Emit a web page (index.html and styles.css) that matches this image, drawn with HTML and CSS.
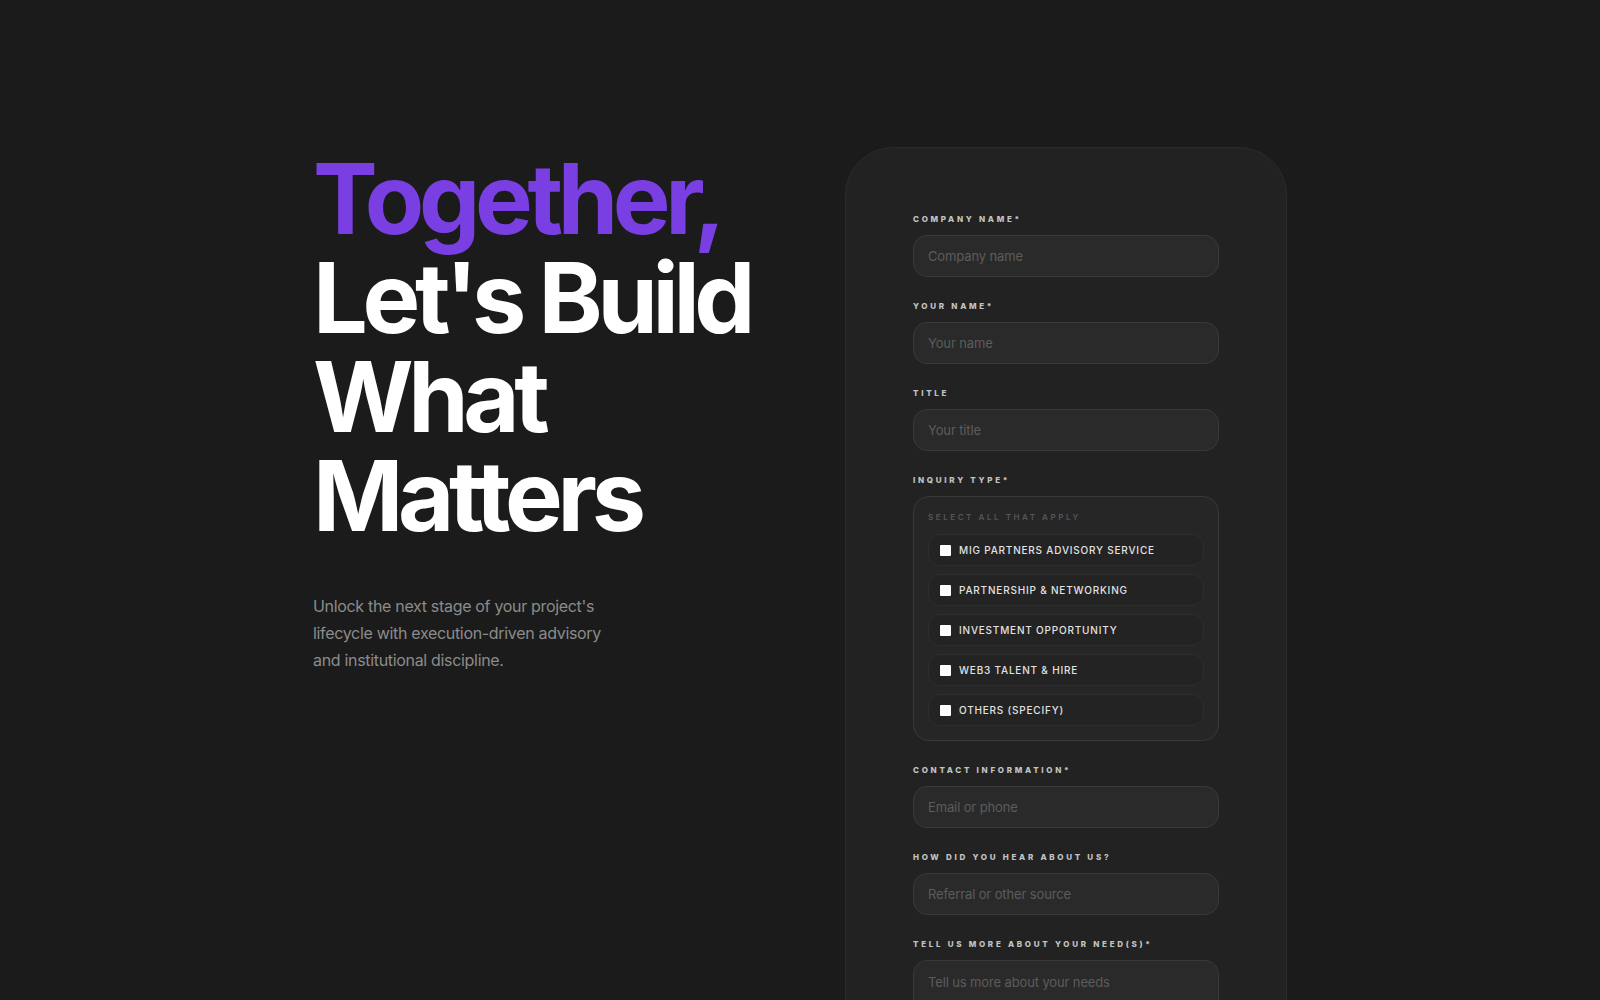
FILE: index.html
```html
<!DOCTYPE html>
<html lang="en">
<head>
<meta charset="utf-8">
<title>Contact</title>
<link rel="stylesheet" href="styles.css">
</head>
<body>
<main class="page">
  <section class="intro">
    <h1 class="headline"><span class="line accent">Together,</span> <span class="line">Let's Build</span> <span class="line">What</span> <span class="line">Matters</span></h1>
    <p class="lede">Unlock the next stage of your project's lifecycle with execution-driven advisory and institutional discipline.</p>
  </section>
  <section class="card">
    <form class="form">
      <div class="field">
        <label class="label">Company Name*</label>
        <input class="input" type="text" placeholder="Company name">
      </div>
      <div class="field">
        <label class="label">Your Name*</label>
        <input class="input" type="text" placeholder="Your name">
      </div>
      <div class="field">
        <label class="label">Title</label>
        <input class="input" type="text" placeholder="Your title">
      </div>
      <div class="field">
        <label class="label">Inquiry Type*</label>
        <div class="choices">
          <div class="choices-hint">Select all that apply</div>
          <label class="option"><input type="checkbox" class="box"><span>MIG Partners Advisory Service</span></label>
          <label class="option"><input type="checkbox" class="box"><span>Partnership &amp; Networking</span></label>
          <label class="option"><input type="checkbox" class="box"><span>Investment Opportunity</span></label>
          <label class="option"><input type="checkbox" class="box"><span>Web3 Talent &amp; Hire</span></label>
          <label class="option"><input type="checkbox" class="box"><span>Others (Specify)</span></label>
        </div>
      </div>
      <div class="field">
        <label class="label">Contact Information*</label>
        <input class="input" type="text" placeholder="Email or phone">
      </div>
      <div class="field">
        <label class="label">How did you hear about us?</label>
        <input class="input" type="text" placeholder="Referral or other source">
      </div>
      <div class="field">
        <label class="label">Tell us more about your need(s)*</label>
        <textarea class="input textarea" placeholder="Tell us more about your needs"></textarea>
      </div>
      <button class="submit" type="button">Submit</button>
    </form>
  </section>
</main>
</body>
</html>
```
FILE: styles.css
```css
* { box-sizing: border-box; }

html, body {
  margin: 0;
  background: #1b1b1b;
  font-family: Inter, "Noto Sans", "Liberation Sans", sans-serif;
  color: #fff;
}

.page {
  display: grid;
  grid-template-columns: 442px 442px;
  column-gap: 90px;
  justify-content: center;
  align-items: start;
  padding: 147px 0 80px;
}

.headline {
  margin: 2px 0 0;
  font-size: 97px;
  line-height: 99px;
  font-weight: 700;
  letter-spacing: -0.055em;
  color: #ffffff;
}

.line {
  display: block;
  white-space: nowrap;
}

.accent {
  color: #7a3fe3;
}

.lede {
  margin: 48px 0 0;
  max-width: 300px;
  font-size: 16px;
  line-height: 27px;
  letter-spacing: -0.02em;
  color: #8b8b8b;
}

.card {
  background: #222222;
  border: 1px solid #2b2b2b;
  border-radius: 48px;
  padding: 65px 67px 80px;
}

.form {
  display: flex;
  flex-direction: column;
  gap: 23px;
}

.field {
  display: flex;
  flex-direction: column;
  gap: 9px;
}

.label {
  font-size: 8px;
  line-height: 13px;
  font-weight: 800;
  letter-spacing: 0.34em;
  text-transform: uppercase;
  color: #c2c2c2;
}

.input {
  width: 100%;
  height: 42px;
  padding: 0 14px;
  background: #2a2a2a;
  border: 1px solid #393939;
  border-radius: 14px;
  font-family: inherit;
  font-size: 13px;
  letter-spacing: -0.01em;
  color: #ddd;
  outline: none;
}

.input::placeholder { color: #5c5c5c; }

.textarea {
  height: 120px;
  padding-top: 13px;
  resize: none;
}

.choices {
  display: flex;
  flex-direction: column;
  gap: 8px;
  padding: 14px;
  background: #262626;
  border: 1px solid #383838;
  border-radius: 16px;
}

.choices-hint {
  font-size: 8px;
  line-height: 13px;
  font-weight: 600;
  letter-spacing: 0.32em;
  text-transform: uppercase;
  color: #565656;
  margin-bottom: 2px;
}

.option {
  display: flex;
  align-items: center;
  gap: 8px;
  height: 32px;
  padding: 0 11px;
  background: #232323;
  border: 1px solid #2e2e2e;
  border-radius: 12px;
  font-size: 10px;
  font-weight: 500;
  letter-spacing: 0.08em;
  text-transform: uppercase;
  color: #e2e2e2;
}

.box {
  appearance: none;
  -webkit-appearance: none;
  width: 11px;
  height: 11px;
  margin: 0;
  background: #ffffff;
  border-radius: 1px;
  flex: none;
}

.submit {
  height: 46px;
  border: none;
  border-radius: 14px;
  background: #7a3fe3;
  color: #fff;
  font-family: inherit;
  font-size: 13px;
  font-weight: 700;
  letter-spacing: 0.2em;
  text-transform: uppercase;
}
```
